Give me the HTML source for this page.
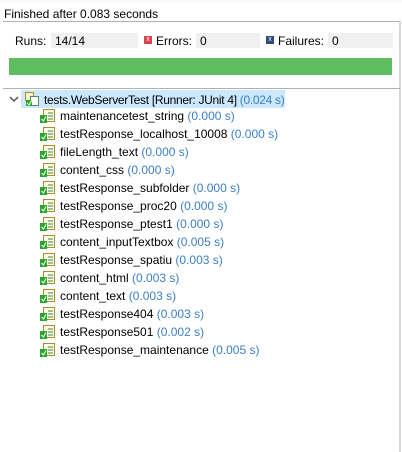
<!DOCTYPE html>
<html><head><style>
body{margin:0;width:402px;height:452px;background:#fff;font-family:"Liberation Sans",sans-serif;font-size:12px;color:#000;position:relative;overflow:hidden}
.a{position:absolute;white-space:nowrap}
.box{position:absolute;background:#f0f0f0;height:15px;top:33px}
.d{color:#3a7fc6}
.row{position:absolute;left:40px;height:18px;line-height:18px}
.ic{position:absolute;left:0;top:1px;width:15px;height:15px}
.row span.x{position:absolute;left:20px;white-space:nowrap}
</style></head><body>
<div class="a" style="left:0;top:0;width:402px;height:3px;background:#fafafa"></div>
<div class="a" style="left:4px;top:7px;font-size:12px">Finished after 0.083 seconds</div>
<div class="a" style="left:3px;top:21px;width:397px;height:1px;background:#b0b0b0"></div>
<div class="a" style="left:399px;top:21px;width:2px;height:431px;background:#d6d6d6"></div>
<div class="box" style="left:51px;width:87px"></div>
<div class="box" style="left:196px;width:64px"></div>
<div class="box" style="left:328px;width:65px"></div>
<div class="a" style="left:15px;top:34px">Runs:</div>
<div class="a" style="left:55px;top:34px">14/14</div>
<div class="a" style="left:144px;top:36px;width:8px;height:8px;background:#d9434f;color:#fff;font-size:7px;line-height:8px;text-align:center">x</div>
<div class="a" style="left:156px;top:34px">Errors:</div>
<div class="a" style="left:200px;top:34px">0</div>
<div class="a" style="left:266px;top:36px;width:8px;height:8px;background:#2d4a7a;color:#fff;font-size:7px;line-height:8px;text-align:center">x</div>
<div class="a" style="left:278px;top:34px">Failures:</div>
<div class="a" style="left:332px;top:34px">0</div>
<div class="a" style="left:9px;top:58px;width:383px;height:17px;background:#5ebd5e"></div>
<div class="a" style="left:3px;top:88px;width:397px;height:1px;background:#b0b0b0"></div>
<div class="a" style="left:21px;top:90px;width:264px;height:18px;background:#cce8ff"></div>
<svg class="a" style="left:9px;top:95px" width="10" height="8"><path d="M1 2 L5 6 L9 2" stroke="#555" stroke-width="1.5" fill="none"/></svg>
<svg class="a" style="left:24px;top:91px" width="16" height="16"><rect x="1.5" y="1.5" width="8" height="8" fill="#fff3c8" stroke="#b08a30"/><rect x="6.5" y="5.5" width="8" height="9" fill="#fff" stroke="#5a8a5a"/><rect x="2" y="9" width="6" height="6" fill="#2aa62a"/><path d="M3 12 L5 14 L8 9" stroke="#fff" fill="none"/></svg>
<div class="a" style="left:44px;top:93px;letter-spacing:-0.3px">tests.WebServerTest [Runner: JUnit 4] <span class="d">(0.024 s)</span></div>
<div id="r"></div>
<script>
var items=[["maintenancetest_string","0.000"],["testResponse_localhost_10008","0.000"],["fileLength_text","0.000"],["content_css","0.000"],["testResponse_subfolder","0.000"],["testResponse_proc20","0.000"],["testResponse_ptest1","0.000"],["content_inputTextbox","0.005"],["testResponse_spatiu","0.003"],["content_html","0.003"],["content_text","0.003"],["testResponse404","0.003"],["testResponse501","0.002"],["testResponse_maintenance","0.005"]];
var h="";items.forEach(function(it,i){var y=107+i*18;h+='<div class="row" style="top:'+y+'px"><svg class="ic" width="16" height="16"><rect x="3.5" y="1.5" width="11" height="12" fill="#fffbe8" stroke="#b08a30"/><path d="M8 5h5M8 8h5M8 11h5" stroke="#3a8a3a"/><rect x="0" y="7" width="7" height="8" fill="#2aa62a"/><path d="M1.5 11 L3.5 13 L6 8.5" stroke="#fff" fill="none"/></svg><span class="x">'+it[0]+' <span class="d">('+it[1]+' s)</span></span></div>';});
document.getElementById("r").innerHTML=h;
</script>
</body></html>
